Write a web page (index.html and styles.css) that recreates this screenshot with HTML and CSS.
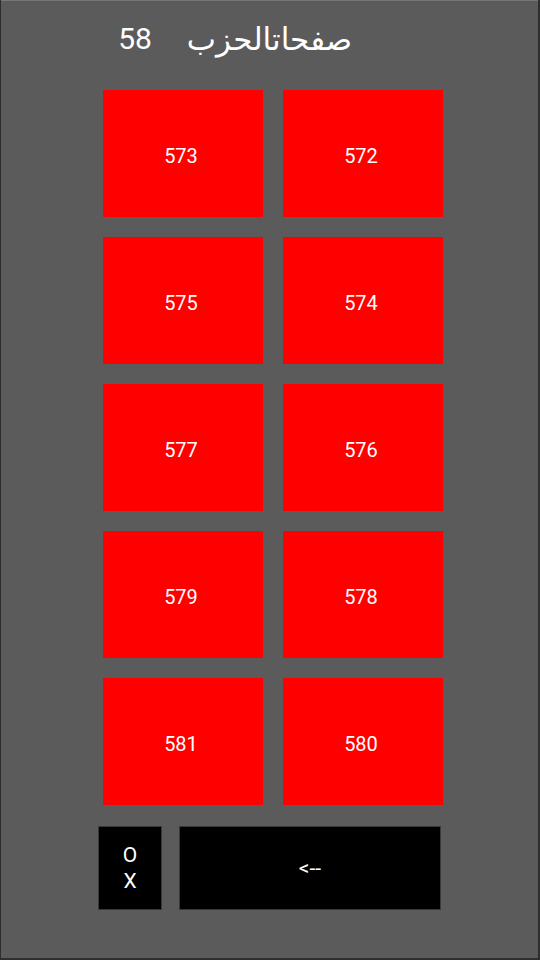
FILE: index.html
```html
<!DOCTYPE html>
<html lang="ar">
<head>
  <meta charset="UTF-8">
  <title>صفحات الحزب</title>
  <link rel="stylesheet" href="styles.css">
</head>
<body>

<div class="frame">
  <div class="header">
    <span class="hizb-num">58</span>
    <span class="hizb-title">صفحاتالحزب</span>
    <span></span>
  </div>

  <div class="pages" dir="rtl">
    <button class="page">572</button>
    <button class="page">573</button>
    <button class="page">574</button>
    <button class="page">575</button>
    <button class="page">576</button>
    <button class="page">577</button>
    <button class="page">578</button>
    <button class="page">579</button>
    <button class="page">580</button>
    <button class="page">581</button>
  </div>

  <div class="controls">
    <button class="btn-ox">O<br>X</button>
    <button class="btn-back">&lt;--</button>
  </div>
</div>

</body>
</html>
```

FILE: styles.css
```css
html, body {
  margin: 0;
  height: 100%;
  background-color: #2e2e2e;
}
body {
  font-family: Roboto, "DejaVu Sans", sans-serif;
  color: #fff;
}

.frame {
  box-sizing: border-box;
  height: 958px;
  margin: 0 2px 0 1px;
  background-color: #5b5b5b;
  border-top: 1px solid #777;
}

.header {
  display: grid;
  grid-template-columns: 1fr auto 1fr;
  align-items: center;
  height: 76px;
  font-size: 30px;
}
.hizb-num {
  justify-self: end;
  margin-right: 35px;
  padding-bottom: 2px;
}
.hizb-title {
  font-family: "DejaVu Sans", sans-serif;
  font-size: 31px;
  direction: rtl;
}

.pages {
  display: grid;
  grid-template-columns: 160px 160px;
  grid-auto-rows: 127px;
  gap: 20px;
  width: 340px;
  margin: 13px 0 0 102px;
}
.page {
  background-color: #ff0000;
  border: none;
  color: #fff;
  font-family: Roboto, sans-serif;
  font-size: 20px;
  padding: 4px 4px 0 0;
}

.controls {
  display: flex;
  gap: 17px;
  margin: 21px 0 0 97px;
  height: 84px;
}
.controls button {
  background-color: #000;
  border: 1px solid #3a3a3a;
  color: #fff;
  font-family: Roboto, sans-serif;
  font-size: 21px;
  padding: 0;
}
.btn-ox {
  width: 64px;
  line-height: 26px;
}
.btn-back {
  width: 262px;
}
```
